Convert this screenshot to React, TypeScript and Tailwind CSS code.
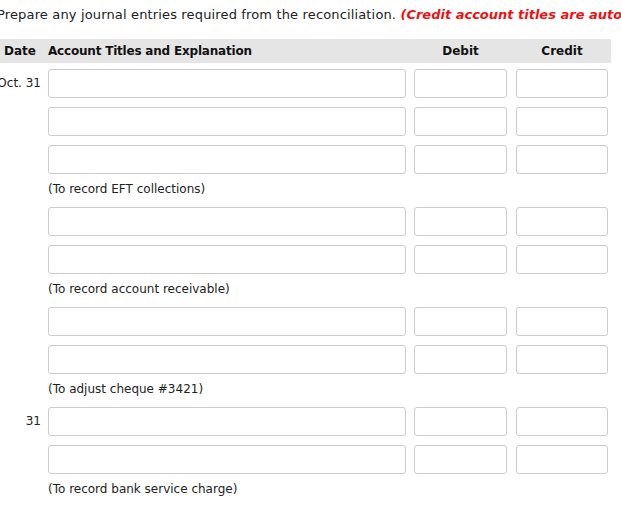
const groups = [
  { date: "Oct. 31", rows: 3, note: "(To record EFT collections)" },
  { date: "", rows: 2, note: "(To record account receivable)" },
  { date: "", rows: 2, note: "(To adjust cheque #3421)" },
  { date: "31", rows: 2, note: "(To record bank service charge)" },
];

const inputCls =
  "h-[29px] rounded-[3px] border border-[#cccccc] bg-white outline-none";

const EntryRow = ({ date }: { date: string }) => (
  <div className="flex h-[38px] pt-[6px]">
    <div className="flex w-[48px] justify-end whitespace-nowrap pr-[7px] pt-[6px] text-[12px] leading-[16px] text-[#222]">
      {date}
    </div>
    <input type="text" className={`${inputCls} w-[358px]`} />
    <input type="text" className={`${inputCls} ml-[8px] w-[93px]`} />
    <input type="text" className={`${inputCls} ml-[9px] w-[92px]`} />
  </div>
);

export default function App() {
  return (
    <div
      className="h-[507px] w-[621px] overflow-hidden bg-white text-black"
      style={{ fontFamily: '"DejaVu Sans", Verdana, sans-serif' }}
    >
      <p className="ml-[-3px] mt-[6px] whitespace-nowrap text-[13px] leading-[18px] text-[#222]">
        <span className="tracking-[0.15px]">
          Prepare any journal entries required from the reconciliation.{" "}
        </span>
        <span className="font-bold italic text-[#ee1111]">
          (Credit account titles are automatically indented when amount is entered. Do not indent manually.)
        </span>
      </p>

      <div className="mt-[15px] w-[611px]">
        <div className="flex h-[24px] items-center bg-[#e5e5e5] text-[12px] font-bold text-[#111]">
          <div className="w-[48px] pl-[4px]">Date</div>
          <div className="w-[358px] tracking-[-0.2px]">Account Titles and Explanation</div>
          <div className="ml-[8px] w-[93px] text-center">Debit</div>
          <div className="ml-[9px] w-[92px] text-center">Credit</div>
        </div>

        {groups.map((g, gi) => (
          <div key={gi}>
            {Array.from({ length: g.rows }).map((_, ri) => (
              <EntryRow key={ri} date={ri === 0 ? g.date : ""} />
            ))}
            <div className="flex h-[24px] items-center pl-[48px] text-[12px] text-[#222]">
              {g.note}
            </div>
          </div>
        ))}
      </div>
    </div>
  );
}
